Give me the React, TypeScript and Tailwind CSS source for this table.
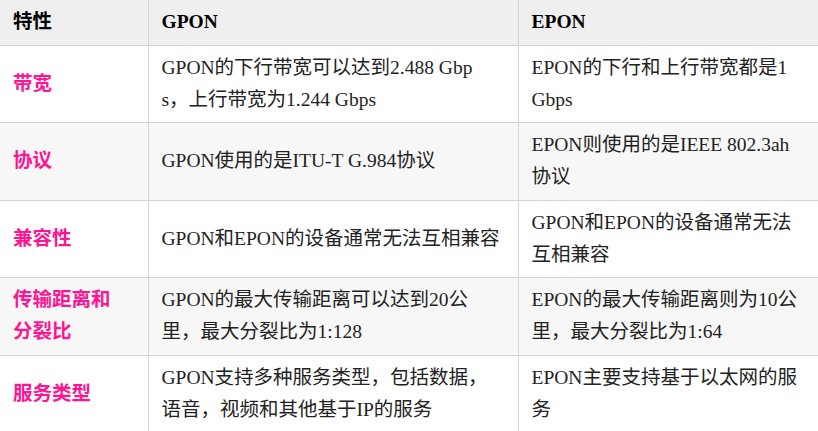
import React from "react";

type Row = { label: React.ReactNode; gpon: React.ReactNode; epon: React.ReactNode };

const rows: Row[] = [
  {
    label: "带宽",
    gpon: (
      <>
        GPON的下行带宽可以达到2.488 Gbp
        <br />s，上行带宽为1.244 Gbps
      </>
    ),
    epon: (
      <>
        EPON的下行和上行带宽都是1
        <br />
        Gbps
      </>
    ),
  },
  {
    label: "协议",
    gpon: <>GPON使用的是ITU-T G.984协议</>,
    epon: (
      <>
        EPON则使用的是IEEE 802.3ah
        <br />
        协议
      </>
    ),
  },
  {
    label: "兼容性",
    gpon: <>GPON和EPON的设备通常无法互相兼容</>,
    epon: (
      <>
        GPON和EPON的设备通常无法
        <br />
        互相兼容
      </>
    ),
  },
  {
    label: (
      <>
        传输距离和
        <br />
        分裂比
      </>
    ),
    gpon: (
      <>
        GPON的最大传输距离可以达到20公
        <br />
        里，最大分裂比为1:128
      </>
    ),
    epon: (
      <>
        EPON的最大传输距离则为10公
        <br />
        里，最大分裂比为1:64
      </>
    ),
  },
  {
    label: "服务类型",
    gpon: (
      <>
        GPON支持多种服务类型，包括数据，
        <br />
        语音，视频和其他基于IP的服务
      </>
    ),
    epon: (
      <>
        EPON主要支持基于以太网的服
        <br />务
      </>
    ),
  },
];

export default function App() {
  return (
    <div
      className="w-[818px] h-[431px] overflow-hidden bg-white text-[#222222]"
      style={{ fontFamily: '"Liberation Serif", "Noto Sans CJK SC", serif' }}
    >
      <table className="w-[830px] table-fixed border-collapse text-[19.5px] leading-[32px]">
        <colgroup>
          <col className="w-[148px]" />
          <col className="w-[370px]" />
          <col />
        </colgroup>
        <thead>
          <tr className="bg-[#efefef] h-[45px]">
            <th className="border-b border-r border-[#d4d4d4] px-[13px] text-left font-bold text-black">特性</th>
            <th className="border-b border-r border-[#d4d4d4] px-[13px] text-left font-bold text-black">GPON</th>
            <th className="border-b border-[#d4d4d4] px-[13px] text-left font-bold text-black">EPON</th>
          </tr>
        </thead>
        <tbody>
          {rows.map((r, i) => (
            <tr key={i} className={`h-[77.5px] ${i % 2 === 1 ? "bg-[#f7f7f7]" : "bg-white"}`}>
              <td className="border-b border-r border-[#d4d4d4] px-[13px] align-middle font-bold text-[#ff1493]">{r.label}</td>
              <td className="border-b border-r border-[#d4d4d4] px-[13px] align-middle whitespace-nowrap">{r.gpon}</td>
              <td className="border-b border-[#d4d4d4] px-[13px] align-middle whitespace-nowrap">{r.epon}</td>
            </tr>
          ))}
        </tbody>
      </table>
    </div>
  );
}
